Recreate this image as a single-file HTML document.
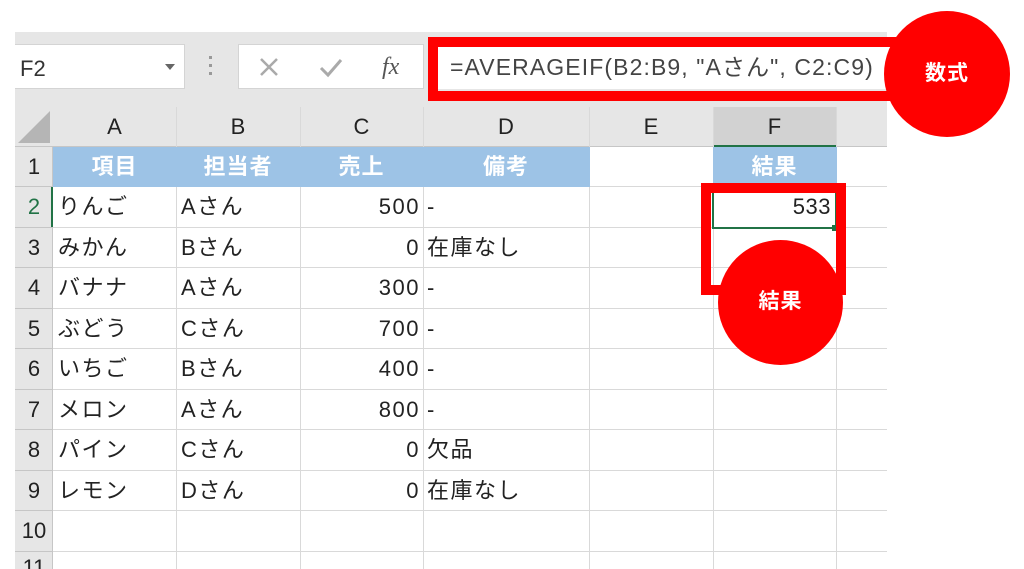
<!DOCTYPE html>
<html><head><meta charset="utf-8"><style>
html,body{margin:0;width:1024px;height:569px;background:#fff;position:relative;overflow:hidden;font-family:"Liberation Sans","Noto Sans CJK JP",sans-serif;}
.a{position:absolute;box-sizing:border-box;}
.t{position:absolute;font-size:22px;color:#222;line-height:40px;white-space:nowrap;letter-spacing:1.5px;}
.h{position:absolute;font-size:22px;color:#fff;font-weight:bold;line-height:40px;text-align:center;letter-spacing:1px;}
.ch{position:absolute;font-size:22px;color:#222;text-align:center;top:107px;line-height:39px;}
.rh{position:absolute;left:15px;width:38px;font-size:22px;color:#222;text-align:center;line-height:40px;}
</style></head><body>
<div class="a" style="left:15px;top:32px;width:872px;height:115px;background:#e6e6e6"></div>
<div class="a" style="left:15px;top:44px;width:170px;height:45px;background:#fff;border:1px solid #d4d4d4;border-left:none"></div>
<div class="t" style="left:20px;top:49px;color:#333;letter-spacing:0">F2</div>
<div class="a" style="left:165px;top:64px;width:0;height:0;border-left:5px solid transparent;border-right:5px solid transparent;border-top:6px solid #666"></div>
<div class="a" style="left:209px;top:56px;width:3px;height:3px;background:#999"></div>
<div class="a" style="left:209px;top:64px;width:3px;height:3px;background:#999"></div>
<div class="a" style="left:209px;top:72px;width:3px;height:3px;background:#999"></div>
<div class="a" style="left:238px;top:44px;width:186px;height:45px;background:#fff;border:1px solid #d4d4d4"></div>
<svg class="a" style="left:258px;top:56px" width="22" height="22"><path d="M3 3L19 19M19 3L3 19" stroke="#aaa" stroke-width="2.5"/></svg>
<svg class="a" style="left:318px;top:56px" width="26" height="22"><path d="M3 12L10 19L23 4" stroke="#aaa" stroke-width="3" fill="none"/></svg>
<div class="t" style="left:382px;top:47px;font-family:'Liberation Serif',serif;font-style:italic;color:#555;font-size:24px;letter-spacing:0">fx</div>
<div class="a" style="left:437px;top:44px;width:450px;height:45px;background:#fff"></div>
<div class="t" style="left:450px;top:47px;color:#444;font-size:23px;letter-spacing:1.1px">=AVERAGEIF(B2:B9, "Aさん", C2:C9)</div>
<div class="a" style="left:428px;top:37px;width:470px;height:64px;border:10px solid #f00;border-right:none"></div>
<div class="a" style="left:15px;top:107px;width:872px;height:40px;border-bottom:1px solid #c6c6c6"></div>
<svg class="a" style="left:17px;top:110px" width="34" height="34"><path d="M33 1L33 33L1 33Z" fill="#b5b5b5"/></svg>
<div class="a" style="left:713px;top:107px;width:123px;height:40px;background:#d2d2d2;border-bottom:2px solid #217346"></div>
<div class="ch" style="left:53px;width:123px">A</div><div class="ch" style="left:176px;width:124px">B</div><div class="ch" style="left:300px;width:123px">C</div><div class="ch" style="left:423px;width:166px">D</div><div class="ch" style="left:589px;width:124px">E</div><div class="ch" style="left:713px;width:123px">F</div>
<div class="a" style="left:15px;top:147px;width:38px;height:422px;background:#e6e6e6;border-right:1px solid #c6c6c6"></div>
<svg class="a" style="left:0;top:0" width="1024" height="569">
<g stroke="#d9d9d9" stroke-width="1">
<path d="M176.5 107V569M300.5 107V569M423.5 107V569M589.5 107V569M713.5 107V569M836.5 107V569"/>
<path d="M53 186.5H887M53 227.5H887M53 267.5H887M53 308.5H887M53 348.5H887M53 389.5H887M53 429.5H887M53 470.5H887M53 510.5H887M53 551.5H887"/>
<path d="M15 186.5H53M15 227.5H53M15 267.5H53M15 308.5H53M15 348.5H53M15 389.5H53M15 429.5H53M15 470.5H53M15 510.5H53M15 551.5H53" stroke="#c6c6c6"/>
</g></svg>
<div class="a" style="left:53px;top:147px;width:537px;height:40px;background:#9dc3e6"></div>
<div class="a" style="left:713px;top:147px;width:124px;height:40px;background:#9dc3e6"></div>
<div class="h" style="left:53px;top:147px;width:123px">項目</div><div class="h" style="left:176px;top:147px;width:124px">担当者</div><div class="h" style="left:300px;top:147px;width:123px">売上</div><div class="h" style="left:423px;top:147px;width:166px">備考</div><div class="h" style="left:713px;top:147px;width:123px">結果</div>
<div class="rh" style="top:147px">1</div><div class="rh" style="top:187px;color:#217346">2</div><div class="rh" style="top:228px">3</div><div class="rh" style="top:268px">4</div><div class="rh" style="top:309px">5</div><div class="rh" style="top:349px">6</div><div class="rh" style="top:390px">7</div><div class="rh" style="top:430px">8</div><div class="rh" style="top:471px">9</div><div class="rh" style="top:511px">10</div><div class="rh" style="top:548px">11</div>
<div class="a" style="left:51px;top:187px;width:2px;height:40px;background:#217346"></div>
<div class="t" style="left:58px;top:187px">りんご</div><div class="t" style="left:181px;top:187px">Aさん</div><div class="t" style="left:300px;top:187px;width:120px;text-align:right">500</div><div class="t" style="left:427px;top:187px">-</div>
<div class="t" style="left:58px;top:228px">みかん</div><div class="t" style="left:181px;top:228px">Bさん</div><div class="t" style="left:300px;top:228px;width:120px;text-align:right">0</div><div class="t" style="left:427px;top:228px">在庫なし</div>
<div class="t" style="left:58px;top:268px">バナナ</div><div class="t" style="left:181px;top:268px">Aさん</div><div class="t" style="left:300px;top:268px;width:120px;text-align:right">300</div><div class="t" style="left:427px;top:268px">-</div>
<div class="t" style="left:58px;top:309px">ぶどう</div><div class="t" style="left:181px;top:309px">Cさん</div><div class="t" style="left:300px;top:309px;width:120px;text-align:right">700</div><div class="t" style="left:427px;top:309px">-</div>
<div class="t" style="left:58px;top:349px">いちご</div><div class="t" style="left:181px;top:349px">Bさん</div><div class="t" style="left:300px;top:349px;width:120px;text-align:right">400</div><div class="t" style="left:427px;top:349px">-</div>
<div class="t" style="left:58px;top:390px">メロン</div><div class="t" style="left:181px;top:390px">Aさん</div><div class="t" style="left:300px;top:390px;width:120px;text-align:right">800</div><div class="t" style="left:427px;top:390px">-</div>
<div class="t" style="left:58px;top:430px">パイン</div><div class="t" style="left:181px;top:430px">Cさん</div><div class="t" style="left:300px;top:430px;width:120px;text-align:right">0</div><div class="t" style="left:427px;top:430px">欠品</div>
<div class="t" style="left:58px;top:471px">レモン</div><div class="t" style="left:181px;top:471px">Dさん</div><div class="t" style="left:300px;top:471px;width:120px;text-align:right">0</div><div class="t" style="left:427px;top:471px">在庫なし</div>
<div class="a" style="left:712px;top:186px;width:125px;height:43px;border:2px solid #217346;background:#fff"></div>
<div class="a" style="left:832px;top:225px;width:6px;height:6px;background:#217346"></div>
<div class="t" style="left:713px;top:187px;width:118px;text-align:right;letter-spacing:0.5px">533</div>
<div class="a" style="left:701px;top:183px;width:145px;height:112px;border:10px solid #f00"></div>
<div class="a" style="left:884px;top:11px;width:126px;height:126px;border-radius:50%;background:#f00"></div>
<div class="h" style="left:884px;top:54px;width:126px;font-size:21px">数式</div>
<div class="a" style="left:718px;top:240px;width:125px;height:125px;border-radius:50%;background:#f00"></div>
<div class="h" style="left:718px;top:282px;width:125px;font-size:21px">結果</div>
</body></html>
